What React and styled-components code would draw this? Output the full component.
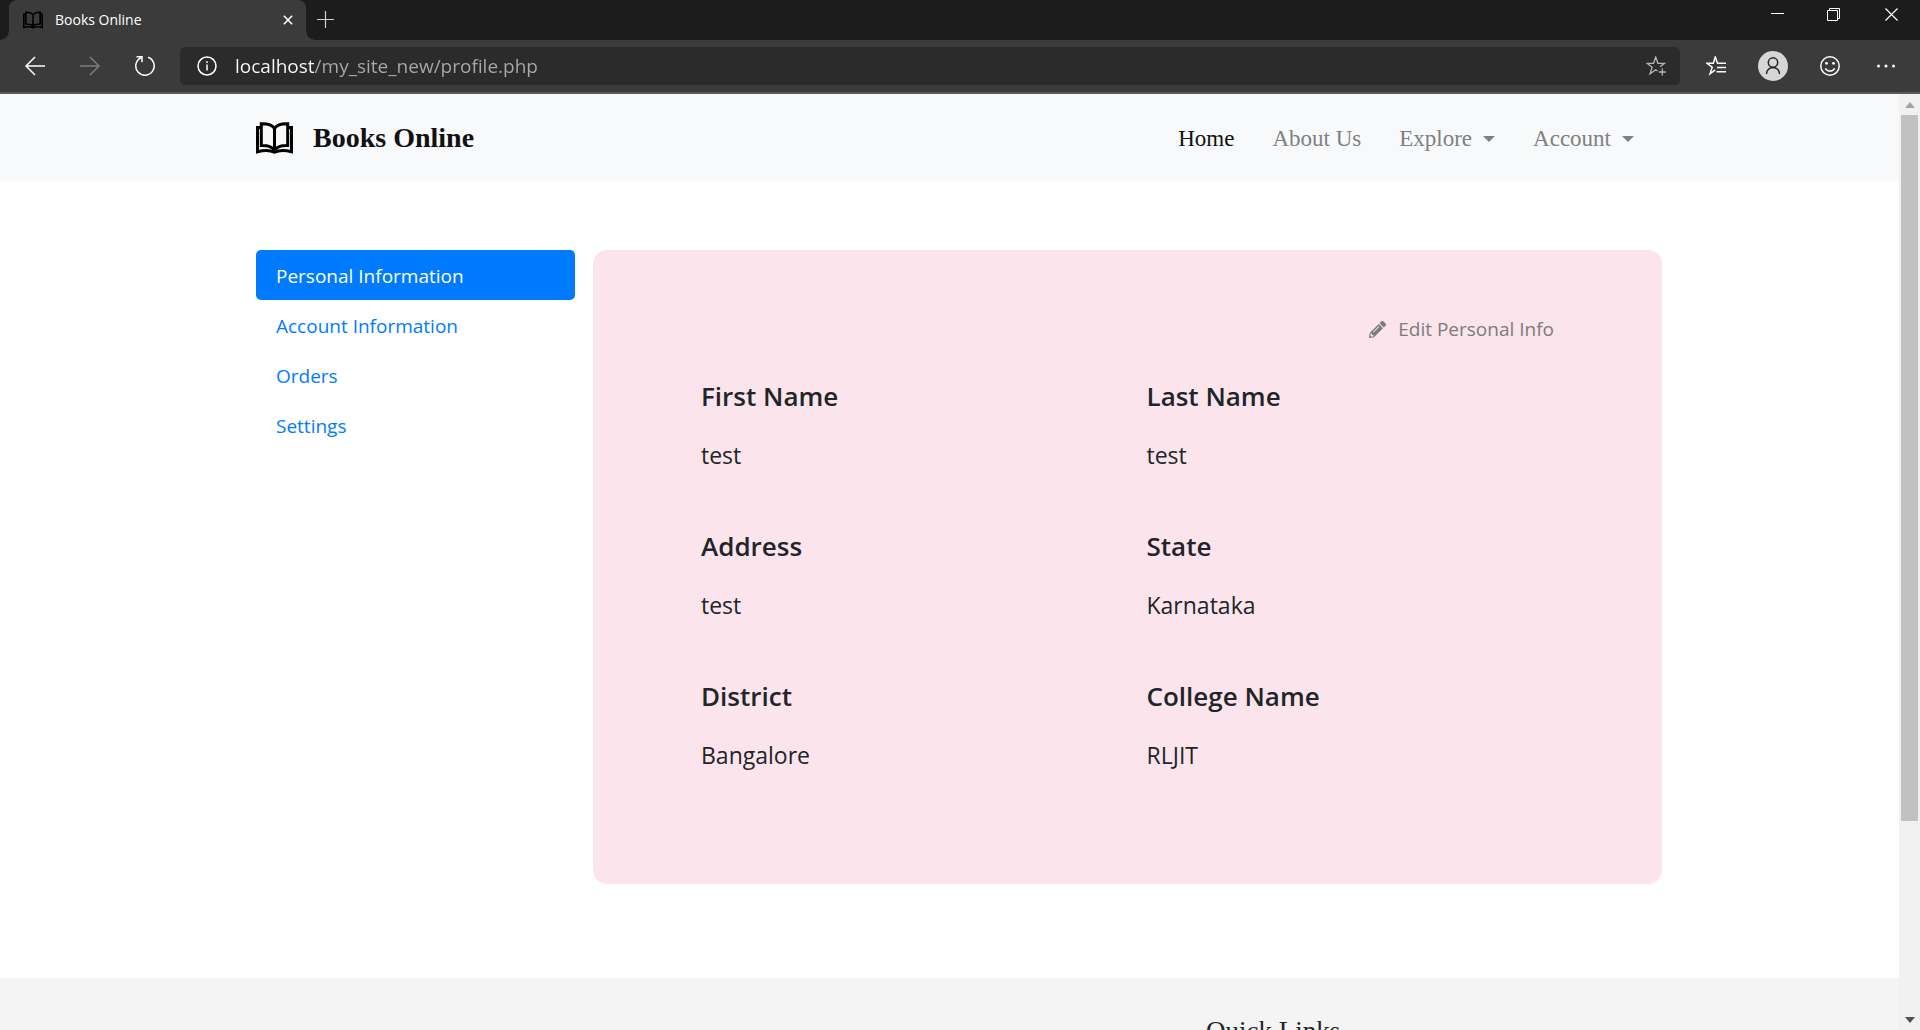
import React from "react";
import styled, { createGlobalStyle } from "styled-components";
import { FaPencilAlt } from "react-icons/fa";

const sans = `"Open Sans", "Noto Sans", sans-serif`;
const serif = `"Liberation Serif", serif`;

const GlobalStyle = createGlobalStyle`
  *, *::before, *::after { box-sizing: border-box; }
  body { margin: 0; background: #fff; color: #212529; font-family: ${sans}; }
  button, input { font: inherit; }
  h1, h2, p, dl, dt, dd { margin: 0; }
`;

const Shell = styled.div`
  display: flex;
  flex-direction: column;
  height: 100vh;
  overflow: hidden;
`;

/* Browser window */
const TabStrip = styled.div`
  display: flex;
  flex: none;
  height: 40px;
  padding-left: 9px;
  background: #1c1c1c;
`;

const Tab = styled.div`
  position: relative;
  display: flex;
  align-items: center;
  width: 297px;
  padding: 0 8px 0 14px;
  border-radius: 8px 8px 0 0;
  background: #3b3b3b;
  color: #fff;
  font-size: 14px;
  line-height: 20px;

  &::before,
  &::after {
    content: "";
    position: absolute;
    bottom: 0;
    width: 8px;
    height: 8px;
  }
  &::before {
    left: -8px;
    background: radial-gradient(circle at 0 0, transparent 7px, #3b3b3b 8px);
  }
  &::after {
    right: -8px;
    background: radial-gradient(circle at 100% 0, transparent 7px, #3b3b3b 8px);
  }
`;

const TabTitle = styled.span`
  flex: 1;
  padding-left: 12px;
`;

const IconButton = styled.button`
  display: flex;
  align-items: center;
  justify-content: center;
  flex: none;
  width: ${(p) => p.$width || 20}px;
  height: ${(p) => p.$height || 20}px;
  padding: 0;
  border: 0;
  background: none;
  color: ${(p) => p.$color || "#fff"};
`;

const WindowControls = styled.div`
  display: flex;
  margin-left: auto;
`;

const Toolbar = styled.div`
  display: flex;
  align-items: center;
  flex: none;
  height: 54px;
  padding: 0 20px 0 25px;
  border-bottom: 2px solid #5a5a5a;
  background: #3b3b3b;
`;

const NavButtons = styled.div`
  display: flex;
  gap: 35px;
`;

const AddressBar = styled.label`
  display: flex;
  align-items: center;
  flex: 1;
  height: 38px;
  margin-left: 25px;
  padding: 0 14px 0 17px;
  border-radius: 5px;
  background: #2b2b2b;
  color: #fff;
`;

const AddressInput = styled.input`
  flex: 1;
  min-width: 0;
  padding: 0;
  margin-left: 18px;
  border: 0;
  outline: 0;
  background: linear-gradient(90deg, #fff 80px, #a9a9a9 80px);
  background-clip: text;
  -webkit-background-clip: text;
  -webkit-text-fill-color: transparent;
  font-size: 19px;
  line-height: 28px;
`;

const ToolbarActions = styled.div`
  display: flex;
  align-items: center;
  gap: 32px;
  padding-left: 26px;
`;

const Avatar = styled(IconButton)`
  border-radius: 50%;
  background: #d6d6d6;
`;

const Viewport = styled.div`
  display: flex;
  flex: 1;
  min-height: 0;
`;

const Page = styled.div`
  flex: 1;
  min-width: 0;
  overflow: hidden;
`;

const Scrollbar = styled.div`
  display: flex;
  flex-direction: column;
  flex: none;
  width: 21px;
  background: #f1f1f1;
`;

const ScrollTrack = styled.div`
  flex: 1;
  padding: 0 2px;
`;

const ScrollThumb = styled.div`
  height: 79%;
  background: #c1c1c1;
`;

/* Site */
const Container = styled.div`
  display: flex;
  width: 100%;
  max-width: 1425px;
  margin: 0 auto;
  padding-left: 19px;
`;

const SiteHeader = styled.header`
  display: flex;
  align-items: center;
  height: 88px;
  background: #f8f9fb;
  font-family: ${serif};
`;

const Brand = styled.a`
  display: flex;
  align-items: center;
  gap: 20px;
  color: #111;
  font-size: 28px;
  font-weight: 700;
  line-height: 36px;
  text-decoration: none;
`;

const SiteNav = styled.nav`
  display: flex;
  align-items: center;
  gap: 38px;
  margin-left: auto;
  padding: 2px 28px 0 0;
  font-size: 23px;
  line-height: 32px;
`;

const NavLink = styled.a`
  color: ${(p) => (p.$active ? "#111" : "#808080")};
  text-decoration: none;
`;

const NavMenu = styled.button`
  display: flex;
  align-items: center;
  gap: 11px;
  padding: 0;
  border: 0;
  background: none;
  color: #808080;

  &::after {
    content: "";
    border-top: 6px solid;
    border-right: 6px solid transparent;
    border-left: 6px solid transparent;
  }
`;

const Main = styled.main`
  padding: 68px 0 94px;
`;

const Layout = styled(Container)`
  align-items: flex-start;
  gap: 18px;
`;

const Sidebar = styled.nav`
  display: flex;
  flex-direction: column;
  flex: 0 1 319px;
`;

const SideLink = styled.a`
  padding: 12px 20px 10px;
  border-radius: 5px;
  background: ${(p) => (p.$active ? "#007bff" : "transparent")};
  color: ${(p) => (p.$active ? "#fff" : "#007bff")};
  font-size: 19px;
  line-height: 28px;
  text-decoration: none;
`;

const Card = styled.section`
  flex: 1;
  padding: 65px 108px 111px;
  border-radius: 14px;
  background: #fbe4eb;
`;

const EditLink = styled.a`
  display: flex;
  align-items: center;
  justify-content: flex-end;
  gap: 12px;
  color: #7c7c7c;
  font-size: 19px;
  line-height: 28px;
  text-decoration: none;
`;

const Details = styled.dl`
  display: grid;
  grid-template-columns: 1fr 1fr;
  gap: 55px 38px;
  padding-top: 35px;
`;

const Term = styled.dt`
  font-size: 26px;
  font-weight: 600;
  line-height: 36px;
`;

const Value = styled.dd`
  padding-top: 23px;
  font-size: 23px;
  line-height: 36px;
`;

const Footer = styled.footer`
  padding: 35px 0;
  background: #f4f4f4;
`;

const FooterColumn = styled.div`
  margin-left: 950px;
  font-family: ${serif};
`;

const FooterTitle = styled.h2`
  font-size: 27px;
  font-weight: 400;
  line-height: 36px;
`;

const line = { fill: "none", stroke: "currentColor", strokeWidth: 1.5 };

function BookIcon({ width, height, weight = 3 }) {
  return (
    <svg width={width} height={height} viewBox="0 0 37 32" fill="none" stroke="#000" strokeWidth={weight} aria-hidden="true">
      <path d="M18.5 6.5C16 2.7 11 1.5 5.3 1.7V23.4c6-.2 11 1.2 13.2 5.2M18.5 6.5C21 2.7 26 1.5 31.7 1.7V23.4c-6-.2-11 1.2-13.2 5.2M18.5 6.5v22" />
      <path d="M5.3 5.5H1.5v24.2c6.500-1.800 12.500-1.800 17 .6 4.500-2.400 10.500-2.400 17-.6V5.500h-3.800" />
    </svg>
  );
}

const BackIcon = () => (
  <svg width="20" height="20" viewBox="0 0 20 20" {...line}><path d="M20 10H1M10 1 1 10l9 9" /></svg>
);
const ForwardIcon = () => (
  <svg width="20" height="20" viewBox="0 0 20 20" {...line}><path d="M0 10h19M10 1l9 9-9 9" /></svg>
);
const ReloadIcon = () => (
  <svg width="20" height="20" viewBox="0 0 20 20" {...line}><path d="M13 1.300A9.200 9.200 0 1 1 6 1.700M1.500 .8H7V6.200" /></svg>
);
const InfoIcon = () => (
  <svg width="20" height="20" viewBox="0 0 20 20" {...line}><circle cx="10" cy="10" r="9" /><path d="M10 8.500v6M10 5.200v1.700" /></svg>
);
const CloseTabIcon = () => (
  <svg width="10" height="10" viewBox="0 0 12 12" {...line} strokeWidth="1.8"><path d="M1 1l10 10M11 1 1 11" /></svg>
);
const PlusIcon = () => (
  <svg width="17" height="17" viewBox="0 0 17 17" {...line} strokeWidth="1.2"><path d="M8.500 0v17M0 8.500h17" /></svg>
);
const MinimizeIcon = () => (
  <svg width="13" height="13" viewBox="0 0 13 13" {...line} strokeWidth="1"><path d="M0 5.500h13" /></svg>
);
const RestoreIcon = () => (
  <svg width="13" height="13" viewBox="0 0 13 13" {...line} strokeWidth="1"><path d="M.5 2.500h10v10H.5zM2.500 2.500v-2h10v10h-2" /></svg>
);
const CloseIcon = () => (
  <svg width="13" height="13" viewBox="0 0 13 13" {...line} strokeWidth="1.2"><path d="M.5 .5l12 12M12.500 .5l-12 12" /></svg>
);
const StarPlusIcon = () => (
  <svg width="20" height="20" viewBox="0 0 20 20" {...line} strokeWidth="1.300">
    <path d="M11.500 15 9.700 13.800 4 17.800 6.200 11.200 1 7.300h6.500L9.700 1l2.200 6.300h6.500L14 10.700M16.300 12.500v7M12.800 16h7" />
  </svg>
);
const FavoritesIcon = () => (
  <svg width="20" height="20" viewBox="0 0 20 20" {...line}>
    <path d="M9.300 13.800 4 17.800 6.200 11.200 1 7.300h6.300L9.300 1l2.200 6.300H20M11 11.500h9M10.500 15.700h9.500" />
  </svg>
);
const PersonIcon = () => (
  <svg width="18" height="20" viewBox="0 0 18 20" {...line}><circle cx="9" cy="6.500" r="4.700" /><path d="M2.500 18c0-4 3-6.500 6.500-6.500s6.500 2.500 6.500 6.500" /></svg>
);
const SmileIcon = () => (
  <svg width="20" height="20" viewBox="0 0 20 20" {...line}>
    <circle cx="10" cy="10" r="9.200" /><path d="M5.300 12.300c2 3.600 7.400 3.600 9.400 0" />
    <g fill="currentColor" stroke="none"><circle cx="6.500" cy="7.300" r="1.400" /><circle cx="13.500" cy="7.300" r="1.400" /></g>
  </svg>
);
const MoreIcon = () => (
  <svg width="20" height="20" viewBox="0 0 20 20" fill="currentColor"><circle cx="2.500" cy="10" r="1.500" /><circle cx="10" cy="10" r="1.500" /><circle cx="17.500" cy="10" r="1.500" /></svg>
);
const ScrollArrow = ({ down }) => (
  <svg width="10" height="6" viewBox="0 0 10 6" fill="currentColor"><path d={down ? "M0 0h10L5 6z" : "M0 6h10L5 0z"} /></svg>
);

const details = [
  ["First Name", "test"],
  ["Last Name", "test"],
  ["Address", "test"],
  ["State", "Karnataka"],
  ["District", "Bangalore"],
  ["College Name", "RLJIT"],
];

const sections = ["Personal Information", "Account Information", "Orders", "Settings"];

function BrowserChrome() {
  return (
    <>
      <TabStrip>
        <Tab>
          <BookIcon width={20} height={18} />
          <TabTitle>Books Online</TabTitle>
          <IconButton aria-label="Close tab"><CloseTabIcon /></IconButton>
        </Tab>
        <IconButton aria-label="New tab" $width={39} $height={38} $color="#d0d0d0"><PlusIcon /></IconButton>
        <WindowControls>
          <IconButton aria-label="Minimize" $width={56} $height={29}><MinimizeIcon /></IconButton>
          <IconButton aria-label="Restore" $width={57} $height={29}><RestoreIcon /></IconButton>
          <IconButton aria-label="Close window" $width={58} $height={29}><CloseIcon /></IconButton>
        </WindowControls>
      </TabStrip>
      <Toolbar>
        <NavButtons>
          <IconButton aria-label="Back"><BackIcon /></IconButton>
          <IconButton aria-label="Forward" $color="#7d7d7d"><ForwardIcon /></IconButton>
          <IconButton aria-label="Reload"><ReloadIcon /></IconButton>
        </NavButtons>
        <AddressBar>
          <InfoIcon />
          <AddressInput aria-label="Address" defaultValue="localhost/my_site_new/profile.php" spellCheck={false} />
          <IconButton aria-label="Add to favorites" $color="#b5b5b5"><StarPlusIcon /></IconButton>
        </AddressBar>
        <ToolbarActions>
          <IconButton aria-label="Favorites"><FavoritesIcon /></IconButton>
          <Avatar aria-label="Profile" $width={30} $height={30} $color="#222"><PersonIcon /></Avatar>
          <IconButton aria-label="Feedback"><SmileIcon /></IconButton>
          <IconButton aria-label="More" $width={28}><MoreIcon /></IconButton>
        </ToolbarActions>
      </Toolbar>
    </>
  );
}

export default function App() {
  return (
    <Shell>
      <GlobalStyle />
      <BrowserChrome />
      <Viewport>
        <Page>
          <SiteHeader>
            <Container>
              <Brand href="#home">
                <BookIcon width={37} height={32} />
                Books Online
              </Brand>
              <SiteNav aria-label="Site">
                <NavLink href="#home" $active>Home</NavLink>
                <NavLink href="#about">About Us</NavLink>
                <NavMenu>Explore</NavMenu>
                <NavMenu>Account</NavMenu>
              </SiteNav>
            </Container>
          </SiteHeader>
          <Main>
            <Layout>
              <Sidebar aria-label="Profile">
                {sections.map((name, i) => (
                  <SideLink key={name} href={`#section-${i}`} $active={i === 0}>{name}</SideLink>
                ))}
              </Sidebar>
              <Card>
                <EditLink href="#edit"><FaPencilAlt size={17} aria-hidden="true" />Edit Personal Info</EditLink>
                <Details>
                  {details.map(([term, value]) => (
                    <div key={term}>
                      <Term>{term}</Term>
                      <Value>{value}</Value>
                    </div>
                  ))}
                </Details>
              </Card>
            </Layout>
          </Main>
          <Footer>
            <Container>
              <FooterColumn>
                <FooterTitle>Quick Links</FooterTitle>
              </FooterColumn>
            </Container>
          </Footer>
        </Page>
        <Scrollbar>
          <IconButton aria-label="Scroll up" $width={21} $height={21} $color="#a3a3a3"><ScrollArrow /></IconButton>
          <ScrollTrack><ScrollThumb /></ScrollTrack>
          <IconButton aria-label="Scroll down" $width={21} $height={21} $color="#505050"><ScrollArrow down /></IconButton>
        </Scrollbar>
      </Viewport>
    </Shell>
  );
}
